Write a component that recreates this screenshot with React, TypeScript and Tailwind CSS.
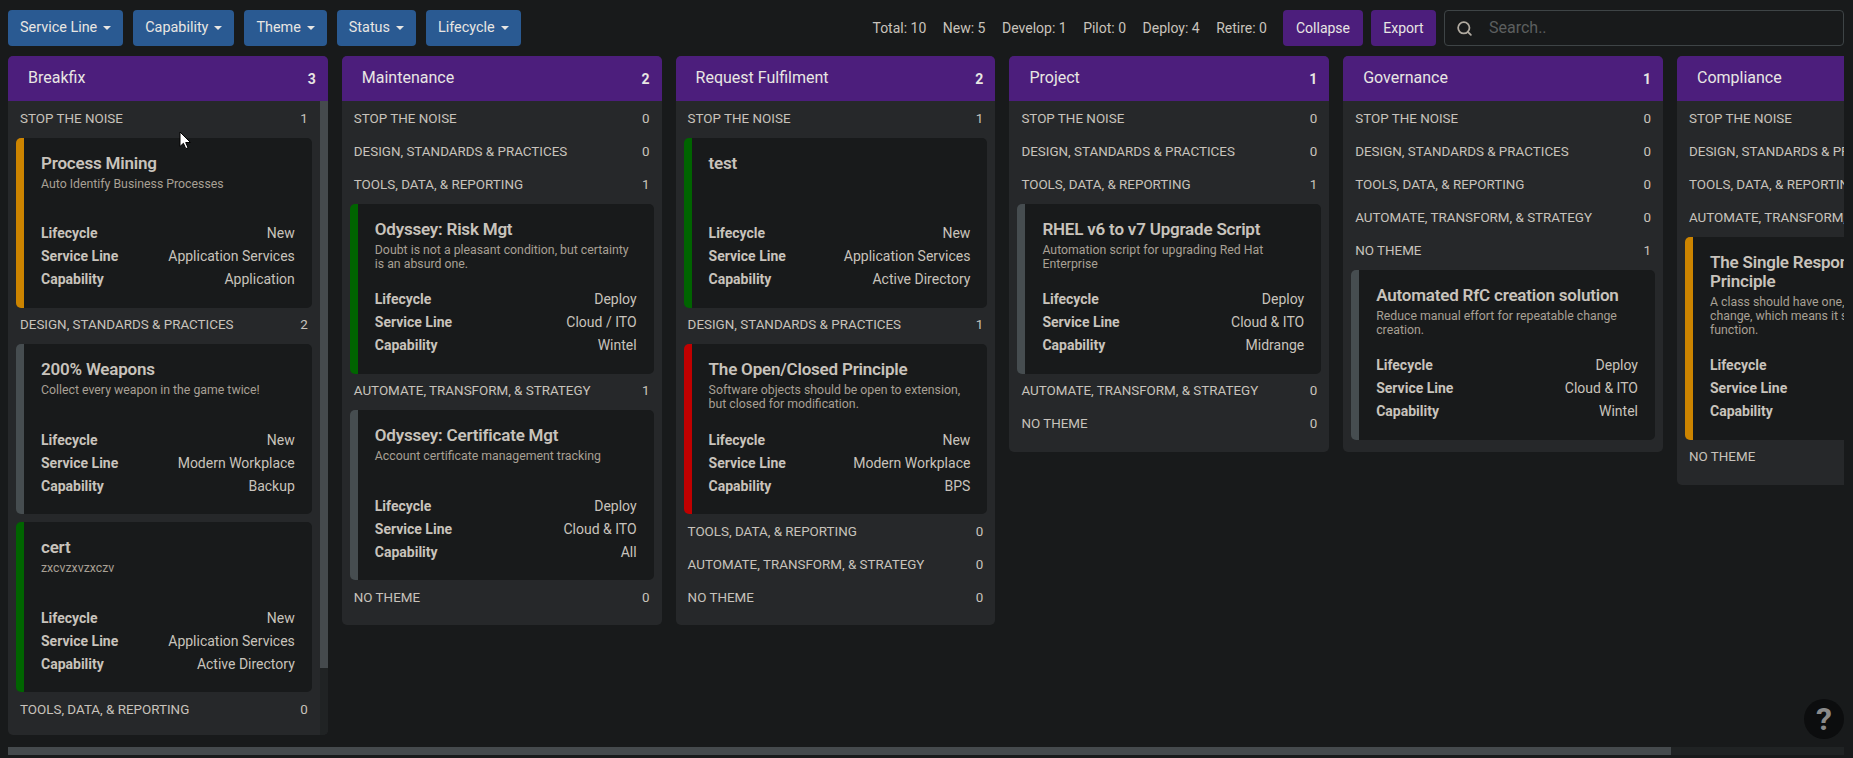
import { Search } from "lucide-react";

type Card = {
  title: string;
  desc: string;
  bar: string;
  lifecycle: string;
  service: string;
  capability: string;
};

type Column = {
  name: string;
  count: number;
  scroll?: boolean;
  sections: { name: string; count: number; cards?: Card[] }[];
};

const GREEN = "border-l-[#006400]";
const ORANGE = "border-l-[#cc8400]";
const GRAY = "border-l-[#464d50]";
const RED = "border-l-[#c00000]";

const STOP = "STOP THE NOISE";
const DESIGN = "DESIGN, STANDARDS & PRACTICES";
const TOOLS = "TOOLS, DATA, & REPORTING";
const AUTO = "AUTOMATE, TRANSFORM, & STRATEGY";
const NONE = "NO THEME";

const columns: Column[] = [
  {
    name: "Breakfix",
    count: 3,
    scroll: true,
    sections: [
      {
        name: STOP,
        count: 1,
        cards: [
          { title: "Process Mining", desc: "Auto Identify Business Processes", bar: ORANGE, lifecycle: "New", service: "Application Services", capability: "Application" },
        ],
      },
      {
        name: DESIGN,
        count: 2,
        cards: [
          { title: "200% Weapons", desc: "Collect every weapon in the game twice!", bar: GRAY, lifecycle: "New", service: "Modern Workplace", capability: "Backup" },
          { title: "cert", desc: "zxcvzxvzxczv", bar: GREEN, lifecycle: "New", service: "Application Services", capability: "Active Directory" },
        ],
      },
      { name: TOOLS, count: 0 },
      { name: AUTO, count: 0 },
      { name: NONE, count: 0 },
    ],
  },
  {
    name: "Maintenance",
    count: 2,
    sections: [
      { name: STOP, count: 0 },
      { name: DESIGN, count: 0 },
      {
        name: TOOLS,
        count: 1,
        cards: [
          { title: "Odyssey: Risk Mgt", desc: "Doubt is not a pleasant condition, but certainty is an absurd one.", bar: GREEN, lifecycle: "Deploy", service: "Cloud / ITO", capability: "Wintel" },
        ],
      },
      {
        name: AUTO,
        count: 1,
        cards: [
          { title: "Odyssey: Certificate Mgt", desc: "Account certificate management tracking", bar: GRAY, lifecycle: "Deploy", service: "Cloud & ITO", capability: "All" },
        ],
      },
      { name: NONE, count: 0 },
    ],
  },
  {
    name: "Request Fulfilment",
    count: 2,
    sections: [
      {
        name: STOP,
        count: 1,
        cards: [
          { title: "test", desc: "", bar: GREEN, lifecycle: "New", service: "Application Services", capability: "Active Directory" },
        ],
      },
      {
        name: DESIGN,
        count: 1,
        cards: [
          { title: "The Open/Closed Principle", desc: "Software objects should be open to extension, but closed for modification.", bar: RED, lifecycle: "New", service: "Modern Workplace", capability: "BPS" },
        ],
      },
      { name: TOOLS, count: 0 },
      { name: AUTO, count: 0 },
      { name: NONE, count: 0 },
    ],
  },
  {
    name: "Project",
    count: 1,
    sections: [
      { name: STOP, count: 0 },
      { name: DESIGN, count: 0 },
      {
        name: TOOLS,
        count: 1,
        cards: [
          { title: "RHEL v6 to v7 Upgrade Script", desc: "Automation script for upgrading Red Hat Enterprise", bar: GRAY, lifecycle: "Deploy", service: "Cloud & ITO", capability: "Midrange" },
        ],
      },
      { name: AUTO, count: 0 },
      { name: NONE, count: 0 },
    ],
  },
  {
    name: "Governance",
    count: 1,
    sections: [
      { name: STOP, count: 0 },
      { name: DESIGN, count: 0 },
      { name: TOOLS, count: 0 },
      { name: AUTO, count: 0 },
      {
        name: NONE,
        count: 1,
        cards: [
          { title: "Automated RfC creation solution", desc: "Reduce manual effort for repeatable change creation.", bar: GRAY, lifecycle: "Deploy", service: "Cloud & ITO", capability: "Wintel" },
        ],
      },
    ],
  },
  {
    name: "Compliance",
    count: 1,
    sections: [
      { name: STOP, count: 0 },
      { name: DESIGN, count: 0 },
      { name: TOOLS, count: 0 },
      {
        name: AUTO,
        count: 1,
        cards: [
          { title: "The Single Responsibility\nPrinciple", desc: "A class should have one, and only one reason to\nchange, which means it should only do one\nfunction.", bar: ORANGE, lifecycle: "New", service: "Cloud & ITO", capability: "Wintel" },
        ],
      },
      { name: NONE, count: 0 },
    ],
  },
];

const filters = ["Service Line", "Capability", "Theme", "Status", "Lifecycle"];
const stats = ["Total: 10", "New: 5", "Develop: 1", "Pilot: 0", "Deploy: 4", "Retire: 0"];

const KanbanCard = ({ card }: { card: Card }) => (
  <div className={`rounded-[5px] border-l-8 bg-[#181a1b] pb-[17px] pl-[17px] pr-[17px] pt-4 ${card.bar}`}>
    <h3 className="whitespace-pre-line text-[17px] font-semibold leading-[19px] tracking-[-0.2px] text-[#c8c3bc]">{card.title}</h3>
    <p className="mt-1 min-h-7 whitespace-pre-line text-[12.3px] leading-[14px] text-[#a8a095]">{card.desc}</p>
    <div className="mt-[17px] text-sm text-[#c8c3bc]">
      {[
        ["Lifecycle", card.lifecycle],
        ["Service Line", card.service],
        ["Capability", card.capability],
      ].map(([label, value]) => (
        <div key={label} className="flex h-[23px] items-center justify-between">
          <span className="font-bold">{label}</span>
          <span>{value}</span>
        </div>
      ))}
    </div>
  </div>
);

const BoardColumn = ({ column }: { column: Column }) => (
  <div className="flex max-h-[679px] w-[319.8px] shrink-0 flex-col overflow-hidden rounded-[5px] bg-[#26282a]">
    <div className="flex h-[45px] shrink-0 items-center justify-between bg-[#4c1e7c] pl-5 pr-3">
      <span className="mb-[2px] text-base text-[#e8e6e3]">{column.name}</span>
      <span className="text-sm font-bold text-[#e8e6e3]">{column.count}</span>
    </div>
    <div className="flex min-h-0 flex-1">
      <div className="min-w-0 flex-1 overflow-hidden pb-3">
        {column.sections.map((section) => (
          <div key={section.name}>
            <div className="flex h-[33px] items-center justify-between px-3 pt-[3px] text-[13.4px] text-[#c8c3bc]">
              <span>{section.name}</span>
              <span>{section.count}</span>
            </div>
            {section.cards && (
              <div className="mx-2 mt-[3.5px] flex flex-col gap-2">
                {section.cards.map((card) => (
                  <KanbanCard key={card.title} card={card} />
                ))}
              </div>
            )}
          </div>
        ))}
      </div>
      {column.scroll && (
        <div className="w-2 shrink-0 bg-[#202324]">
          <div className="h-[567px] bg-[#454a4d]" />
        </div>
      )}
    </div>
  </div>
);

export default function App() {
  return (
    <div className="relative flex h-[758px] w-[1853px] flex-col overflow-hidden bg-[#181a1b] pl-2 pr-[9px] pt-[10px] font-[Roboto,sans-serif]">
      {/* Toolbar */}
      <div className="flex h-9 shrink-0 items-center">
        <div className="flex gap-[10px]">
          {filters.map((label) => (
            <button key={label} className="flex h-9 items-center gap-[6px] rounded bg-[#2a5a92] px-3 text-[14.4px] text-[#e8e6e3]">
              {label}
              <span className="h-0 w-0 border-x-4 border-t-4 border-x-transparent border-t-[#e8e6e3]" />
            </button>
          ))}
        </div>
        <div className="ml-auto flex gap-[16.5px] text-sm text-[#c8c3bc]">
          {stats.map((s) => (
            <span key={s}>{s}</span>
          ))}
        </div>
        <button className="ml-4 h-9 w-20 rounded bg-[#4c1e7c] text-sm text-[#e8e6e3]">Collapse</button>
        <button className="ml-2 h-9 w-[65px] rounded bg-[#4c1e7c] text-sm text-[#e8e6e3]">Export</button>
        <div className="ml-2 flex h-9 w-[400px] items-center rounded border border-[#3e4446] bg-[#181a1b] pl-[11px]">
          <Search size={17} strokeWidth={2.5} className="text-[#b0aaa0]" />
          <span className="ml-[16px] text-base text-[#5c5f5f]">Search..</span>
        </div>
      </div>

      {/* Board */}
      <div className="mt-[10px] flex min-h-0 flex-1 items-start gap-[14px] overflow-hidden">
        {columns.map((column) => (
          <BoardColumn key={column.name} column={column} />
        ))}
      </div>

      {/* Horizontal scrollbar */}
      <div className="mb-[3px] h-2 shrink-0 bg-[#202324]">
        <div className="h-2 w-[1663px] bg-[#454a4d]" />
      </div>

      {/* Help */}
      <div className="absolute left-[1804px] top-[699px] flex h-10 w-10 items-center justify-center rounded-full bg-[#0c0d0e] text-[32px] font-bold text-[#8a8a8a]">
        ?
      </div>

      {/* Mouse pointer */}
      <svg className="absolute left-[179px] top-[131px]" width="13" height="19" viewBox="0 0 13 19">
        <path d="M1 1v14.500l3.400-3.200 2.400 5.400 2.200-1-2.300-5.200h4.800z" fill="#fff" stroke="#000" strokeWidth="1" />
      </svg>
    </div>
  );
}
